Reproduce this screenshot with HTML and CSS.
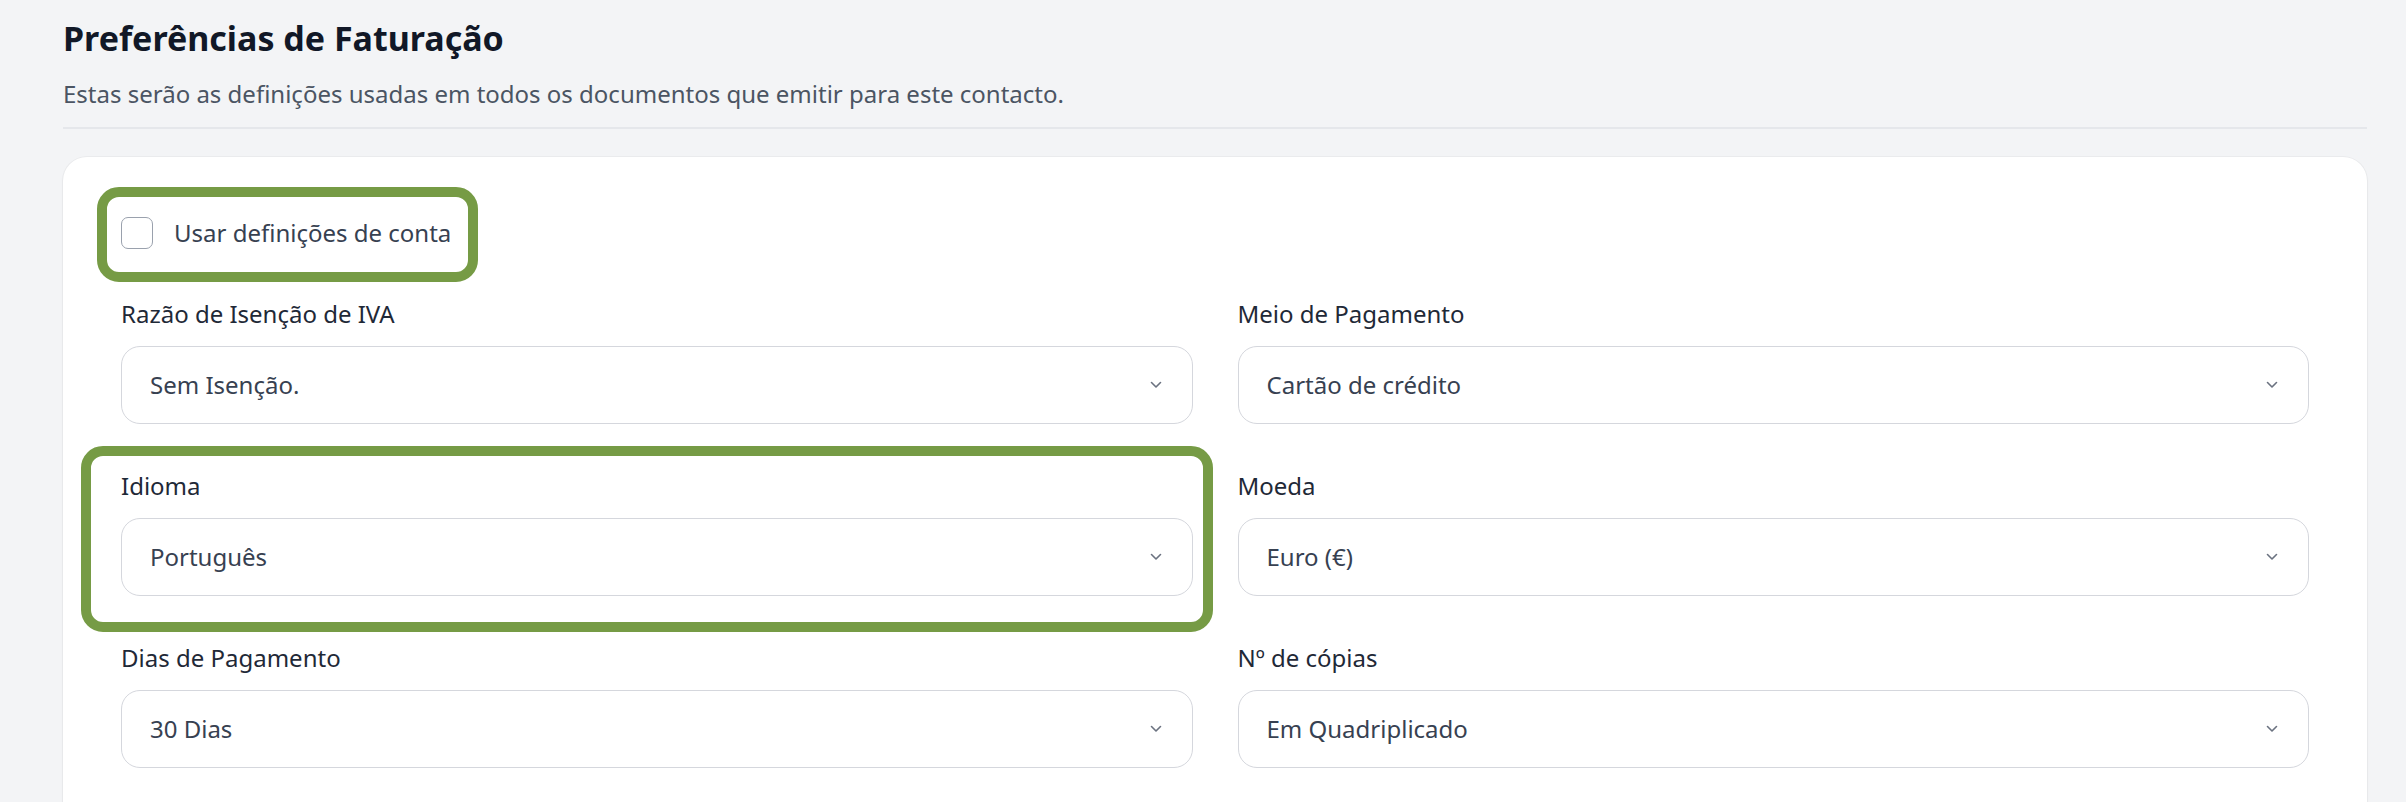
FILE: index.html
```html
<!DOCTYPE html>
<html lang="pt">
<head>
<meta charset="utf-8">
<title>Preferências de Faturação</title>
<link rel="stylesheet" href="styles.css">
</head>
<body>
<main class="page">
  <h1 class="title">Preferências de Faturação</h1>
  <p class="subtitle">Estas serão as definições usadas em todos os documentos que emitir para este contacto.</p>
  <hr class="divider">
  <section class="card">
    <div class="mark mark-checkbox"></div>
    <div class="mark mark-idioma"></div>
    <div class="form-grid">
      <label class="check-row">
        <span class="checkbox"></span>
        <span class="check-text">Usar definições de conta</span>
      </label>

      <div class="field">
        <div class="field-label">Razão de Isenção de IVA</div>
        <div class="select"><span class="select-value">Sem Isenção.</span><svg class="chev" width="12" height="8" viewBox="0 0 12 8"><polyline points="1.5,1.5 6,6 10.5,1.5" fill="none" stroke="#6b7280" stroke-width="1.6" stroke-linecap="round" stroke-linejoin="round"/></svg></div>
      </div>
      <div class="field">
        <div class="field-label">Meio de Pagamento</div>
        <div class="select"><span class="select-value">Cartão de crédito</span><svg class="chev" width="12" height="8" viewBox="0 0 12 8"><polyline points="1.5,1.5 6,6 10.5,1.5" fill="none" stroke="#6b7280" stroke-width="1.6" stroke-linecap="round" stroke-linejoin="round"/></svg></div>
      </div>

      <div class="field">
        <div class="field-label">Idioma</div>
        <div class="select"><span class="select-value">Português</span><svg class="chev" width="12" height="8" viewBox="0 0 12 8"><polyline points="1.5,1.5 6,6 10.5,1.5" fill="none" stroke="#6b7280" stroke-width="1.6" stroke-linecap="round" stroke-linejoin="round"/></svg></div>
      </div>
      <div class="field">
        <div class="field-label">Moeda</div>
        <div class="select"><span class="select-value">Euro (€)</span><svg class="chev" width="12" height="8" viewBox="0 0 12 8"><polyline points="1.5,1.5 6,6 10.5,1.5" fill="none" stroke="#6b7280" stroke-width="1.6" stroke-linecap="round" stroke-linejoin="round"/></svg></div>
      </div>

      <div class="field">
        <div class="field-label">Dias de Pagamento</div>
        <div class="select"><span class="select-value">30 Dias</span><svg class="chev" width="12" height="8" viewBox="0 0 12 8"><polyline points="1.5,1.5 6,6 10.5,1.5" fill="none" stroke="#6b7280" stroke-width="1.6" stroke-linecap="round" stroke-linejoin="round"/></svg></div>
      </div>
      <div class="field">
        <div class="field-label">Nº de cópias</div>
        <div class="select"><span class="select-value">Em Quadriplicado</span><svg class="chev" width="12" height="8" viewBox="0 0 12 8"><polyline points="1.5,1.5 6,6 10.5,1.5" fill="none" stroke="#6b7280" stroke-width="1.6" stroke-linecap="round" stroke-linejoin="round"/></svg></div>
      </div>
    </div>
  </section>
</main>
</body>
</html>
```
FILE: styles.css
```css
html {
  overflow: hidden;
}
body {
  margin: 0;
  background: #f3f4f6;
  font-family: "Noto Sans", "Open Sans", sans-serif;
  color: #1f2937;
}
.page {
  padding: 15px 39px 0 63px;
}
.title {
  margin: 0;
  font-size: 34px;
  line-height: 47px;
  font-weight: 700;
  color: #111827;
}
.subtitle {
  margin: 12px 0 0 0;
  font-size: 24px;
  line-height: 40px;
  color: #4b5563;
}
.divider {
  margin: 13px 0 0 0;
  border: 0;
  height: 2px;
  background: #e5e7eb;
}
.card {
  position: relative;
  margin-top: 28px;
  background: #ffffff;
  border-radius: 24px;
  padding: 58px;
  box-shadow: 0 0 0 1px rgba(17, 24, 39, 0.035), 0 1px 3px rgba(17, 24, 39, 0.04);
}
.form-grid {
  display: grid;
  grid-template-columns: 1fr 1fr;
  column-gap: 45px;
  row-gap: 44px;
}
.check-row {
  grid-column: 1 / span 2;
  display: flex;
  align-items: center;
  gap: 21px;
  height: 36px;
  margin-bottom: 1px;
}
.checkbox {
  box-sizing: border-box;
  width: 32px;
  height: 32px;
  border: 1.5px solid #9aa1ad;
  border-radius: 7px;
  background: #fff;
}
.check-text {
  font-size: 24px;
  line-height: 36px;
  color: #374151;
}
.field {
  display: flex;
  flex-direction: column;
}
.field-label {
  font-size: 24px;
  line-height: 36px;
  color: #1f2937;
  margin-bottom: 14px;
}
.select {
  box-sizing: border-box;
  height: 78px;
  border: 1.5px solid #d5d7dd;
  border-radius: 19px;
  display: flex;
  align-items: center;
  justify-content: space-between;
  padding: 0 30px 0 28px;
}
.select-value {
  font-size: 24px;
  line-height: 36px;
  color: #374151;
}
.chev {
  display: block;
  flex: none;
}
.mark {
  position: absolute;
  box-sizing: border-box;
  border: 10.5px solid #769b45;
  border-radius: 22px;
  pointer-events: none;
}
.mark-checkbox {
  left: 34px;
  top: 30px;
  width: 381px;
  height: 95px;
}
.mark-idioma {
  left: 18px;
  top: 289px;
  width: 1132px;
  height: 186px;
}
```
